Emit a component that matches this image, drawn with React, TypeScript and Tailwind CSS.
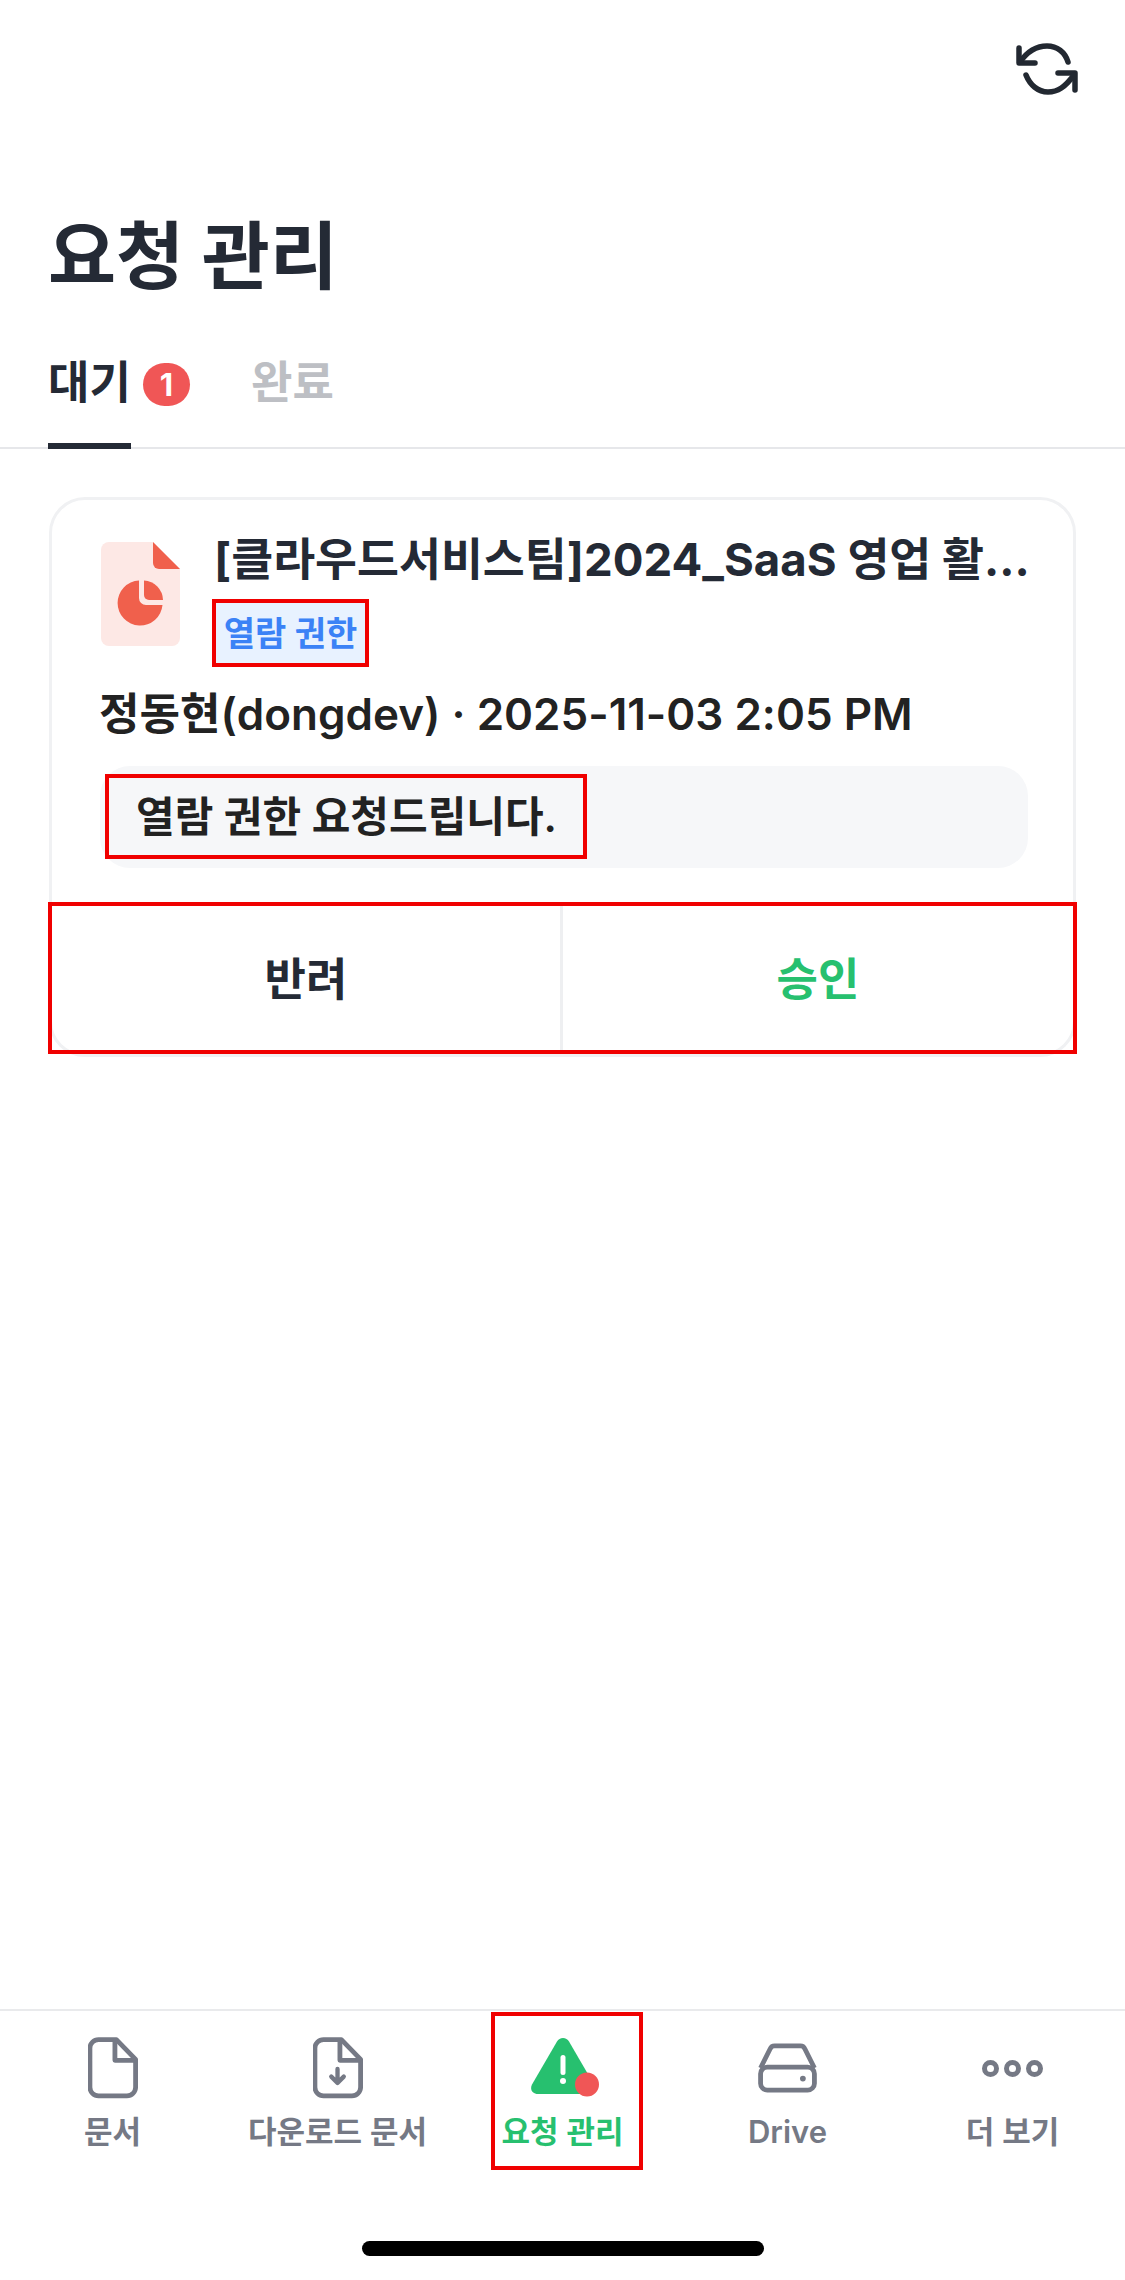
function RefreshIcon() {
  return (
    <svg width="90" height="80" viewBox="0 0 90 80" fill="none" stroke="#222831" strokeWidth="5.500" strokeLinecap="round" strokeLinejoin="round">
      <path d="M19 18v15h16" />
      <path d="M20 32C27 22 36 16 47 16C57 16 65 22 68 32" />
      <path d="M58 43h17v17" />
      <path d="M26 45C30 55 38 62 48 62C58 62 65 57 74 45" />
    </svg>
  );
}

function FileIcon({ arrow }: { arrow?: boolean }) {
  return (
    <svg width="50" height="62" viewBox="0 0 52 64" fill="none">
      <path
        d="M11 2.500h18.500L49.500 23v29a9 9 0 0 1-9 9H11a9 9 0 0 1-9-9V11.500a9 9 0 0 1 9-9Z"
        stroke="#757985"
        strokeWidth="5"
        strokeLinejoin="round"
      />
      <path d="M28 3v21h21" stroke="#757985" strokeWidth="5" strokeLinejoin="round" />
      {arrow && (
        <path d="M25.500 33v13M19 41l6.500 6.500L32 41" stroke="#757985" strokeWidth="4.500" strokeLinecap="round" strokeLinejoin="round" />
      )}
    </svg>
  );
}

function DriveIcon() {
  return (
    <svg width="61" height="50" viewBox="0 0 62 52" fill="none" stroke="#757985" strokeWidth="5" strokeLinejoin="round">
      <path d="M3 26 13 6a5 5 0 0 1 4.500-3h27a5 5 0 0 1 4.500 3l10 20" />
      <rect x="3" y="25" width="56" height="24" rx="7" />
      <circle cx="47" cy="37" r="3" fill="#757985" stroke="none" />
    </svg>
  );
}

function MoreIcon() {
  return (
    <svg width="61" height="17" viewBox="0 0 61 17" fill="none" stroke="#757985" strokeWidth="5">
      <circle cx="8.500" cy="8.500" r="6" />
      <circle cx="30.500" cy="8.500" r="6" />
      <circle cx="52.500" cy="8.500" r="6" />
    </svg>
  );
}

function AlertIcon() {
  return (
    <svg width="64" height="59" viewBox="0 0 64 59" fill="none" className="overflow-visible">
      <path
        d="M26 3.500a7 7 0 0 1 12 0l25 43c2.500 5-.5 9.500-6 9.500H7c-5.500 0-8.500-4.500-6-9.500Z"
        fill="#27c06f"
      />
      <rect x="29.500" y="17" width="5" height="20" rx="2.500" fill="#fff" />
      <circle cx="32" cy="43" r="3" fill="#fff" />
      <circle cx="56" cy="46.500" r="12" fill="#f05656" />
    </svg>
  );
}

function NavItem({ icon, label }: { icon: React.ReactNode; label: string }) {
  return (
    <div className="flex flex-col items-center">
      <div className="h-[66px] flex items-center justify-center">{icon}</div>
      <span className="mt-[11px] text-[31px] leading-[40px] font-semibold text-[#757985] whitespace-nowrap">{label}</span>
    </div>
  );
}

export default function App() {
  return (
    <div className="h-[2280px] w-[1125px] flex flex-col bg-white font-['Inter','Noto_Sans_CJK_KR',sans-serif]">
      <div className="flex justify-end pt-[30px] pr-[35px]">
        <RefreshIcon />
      </div>

      <h1 className="mt-[102px] ml-[48px] text-[74px] leading-[88px] font-bold text-[#242a35]">요청 관리</h1>

      <div className="mt-[54px] flex px-[48px] border-b-[2px] border-[#e6e7ea] h-[95px]">
        <div className="relative flex items-start pt-[4px] border-b-[6px] border-[#242a35] -mb-[2px] h-[95px] w-[83px]">
          <span className="text-[45px] leading-[50px] font-bold text-[#242a35] whitespace-nowrap">대기</span>
          <span className="absolute left-[95px] top-[9px] w-[47px] h-[43px] rounded-full bg-[#f05656] text-white text-[31px] leading-[43px] font-bold text-center">1</span>
        </div>
        <span className="ml-[120px] pt-[4px] text-[45px] leading-[50px] font-bold text-[#bdbfc4]">완료</span>
      </div>

      <div className="mt-[48px] mx-[49px] h-[560px] rounded-[36px] border-[3px] border-[#f0f1f3] flex flex-col pt-[31px]">
        <div className="flex pl-[49px] pr-[50px]">
          <svg width="79" height="104" viewBox="0 0 79 104" className="mt-[11px] shrink-0">
            <path d="M8 0h44l27 27v69a8 8 0 0 1-8 8H8a8 8 0 0 1-8-8V8a8 8 0 0 1 8-8Z" fill="#fde8e5" />
            <path d="M52 0l27 27H58a6 6 0 0 1-6-6Z" fill="#f0604c" />
            <path d="M38 38.500V56a7 7 0 0 0 7 7h16.500A22.500 22.500 0 1 1 38 38.500Z" fill="#f0604c" />
            <path d="M43 38.500A20 20 0 0 1 62 58H48a5 5 0 0 1-5-5Z" fill="#f0604c" />
          </svg>
          <div className="ml-[32px] min-w-0">
            <div className="ml-[2px] text-[45.600px] leading-[58px] font-bold text-[#242a35] whitespace-nowrap">[클라우드서비스팀]2024_SaaS 영업 활...</div>
            <div className="mt-[10px] w-[157px] h-[68px] border-[4px] border-[#f00000] bg-[#e8f2ff] flex items-center justify-center text-[34px] font-semibold text-[#3b82f6] whitespace-nowrap">열람 권한</div>
          </div>
        </div>

        <div className="mt-[20px] pl-[47px] text-[44px] leading-[54px] font-semibold text-[#222222] whitespace-nowrap">정동현(dongdev) · 2025-11-03 2:05 PM</div>

        <div className="mt-[25px] ml-[48px] w-[928px] h-[102px] rounded-[30px] bg-[#f6f7f9] pt-[8px] pl-[5px]">
          <div className="w-[482px] h-[85px] border-[4px] border-[#f00000] flex items-center pl-[27px] text-[42px] font-semibold text-[#222222] whitespace-nowrap">열람 권한 요청드립니다.</div>
        </div>

        <div className="mt-[34px] -mx-[4px] h-[152px] border-[4px] border-[#f00000] grid grid-cols-[511px_1fr]">
          <div className="flex items-center justify-center pt-[3px] border-r-[3px] border-[#eeeff1] text-[45px] font-bold text-[#242a35]">반려</div>
          <div className="flex items-center justify-center pt-[3px] text-[45px] font-bold text-[#27c06f]">승인</div>
        </div>
      </div>

      <div className="mt-auto border-t-[2px] border-[#e9eaec] grid grid-cols-5 h-[161px]">
        <div className="pt-[24px]"><NavItem icon={<FileIcon />} label="문서" /></div>
        <div className="pt-[24px]"><NavItem icon={<FileIcon arrow />} label="다운로드 문서" /></div>
        <div className="flex justify-center pt-[1px] pl-[8px]">
          <div className="w-[152px] h-[158px] border-[4px] border-[#f00000] flex flex-col items-center pt-[18px] pr-[8px]">
            <div className="h-[66px] flex items-center justify-center"><AlertIcon /></div>
            <span className="mt-[12px] text-[31px] leading-[40px] font-semibold text-[#27c06f] whitespace-nowrap">요청 관리</span>
          </div>
        </div>
        <div className="pt-[24px]"><NavItem icon={<DriveIcon />} label="Drive" /></div>
        <div className="pt-[24px]"><NavItem icon={<MoreIcon />} label="더 보기" /></div>
      </div>

      <div className="h-[110px] flex justify-center pt-[71px]">
        <div className="w-[402px] h-[15px] rounded-full bg-black" />
      </div>
    </div>
  );
}
